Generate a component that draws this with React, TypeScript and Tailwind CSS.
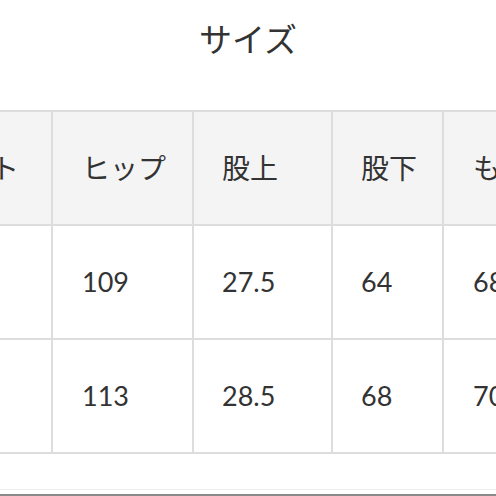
import React from "react";

const font = { fontFamily: "Lato, 'Noto Sans CJK JP', sans-serif" };

const widths = ["w-[170px] pl-[26px]", "w-[139px] pl-[29px]", "w-[137px] pl-[28px]", "w-[109px] pl-[28px]", "w-[160px] pl-[29px]"];

const header = ["ウエスト", "ヒップ", "股上", "股下", "もも周り"];
const rows = [
  ["76", "109", "27.5", "64", "68"],
  ["80", "113", "28.5", "68", "70"],
];

function Row({ cells, head }: { cells: string[]; head?: boolean }) {
  return (
    <div className="flex gap-[2px]">
      {cells.map((c, i) => (
        <div
          key={i}
          className={`${widths[i]} shrink-0 h-[112px] flex items-center text-[#333] ${
            head ? "bg-[#f4f4f4] text-[28px]" : "bg-white text-[27px]"
          }`}
        >
          {c}
        </div>
      ))}
    </div>
  );
}

export default function App() {
  return (
    <div className="w-[496px] h-[496px] bg-white overflow-hidden relative" style={font}>
      <div className="h-[110px] pt-[19px] flex justify-center">
        <div className="text-[33px] leading-[40px] text-[#333]">サイズ</div>
      </div>
      <div className="ml-[-121px] w-[729px] bg-[#dddddd] p-[2px] flex flex-col gap-[2px]">
        <Row cells={header} head />
        {rows.map((r, i) => (
          <Row key={i} cells={r} />
        ))}
      </div>
      <div className="mt-[35px] h-[1px] bg-[#efefef]" />
      <div className="mt-[4px] h-[2px] bg-[#8a8a8a]" />
    </div>
  );
}
